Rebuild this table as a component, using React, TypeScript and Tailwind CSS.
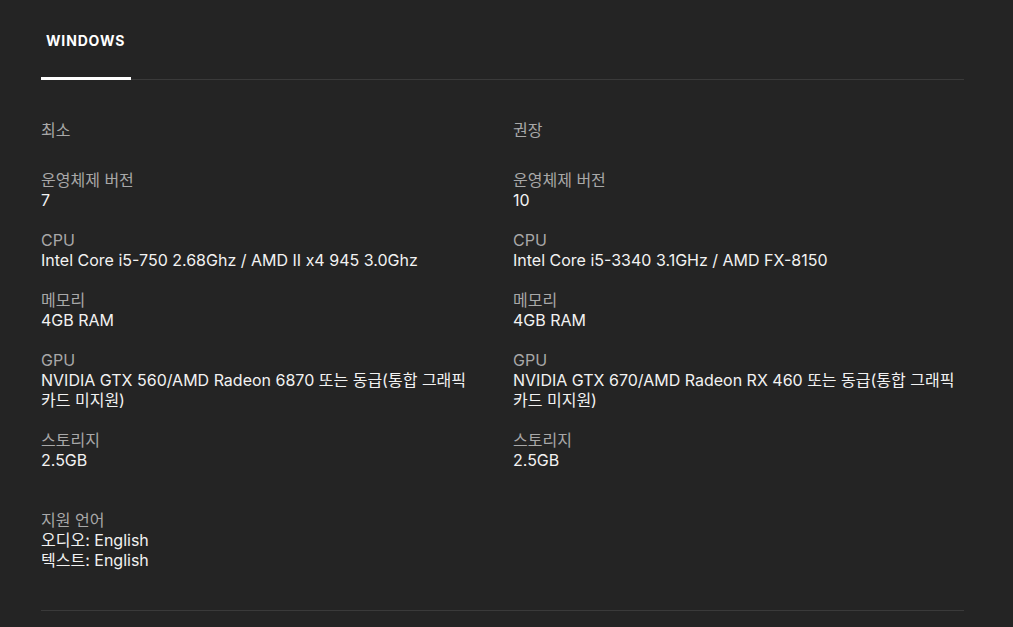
import React from "react";

const font = { fontFamily: 'Inter, "Noto Sans CJK KR", sans-serif' };

type Row = { label: string; value: string };

const minRows: Row[] = [
  { label: "운영체제 버전", value: "7" },
  { label: "CPU", value: "Intel Core i5-750 2.68Ghz / AMD II x4 945 3.0Ghz" },
  { label: "메모리", value: "4GB RAM" },
  { label: "GPU", value: "NVIDIA GTX 560/AMD Radeon 6870 또는 동급(통합 그래픽 카드 미지원)" },
  { label: "스토리지", value: "2.5GB" },
];
const recRows: Row[] = [
  { label: "운영체제 버전", value: "10" },
  { label: "CPU", value: "Intel Core i5-3340 3.1GHz / AMD FX-8150" },
  { label: "메모리", value: "4GB RAM" },
  { label: "GPU", value: "NVIDIA GTX 670/AMD Radeon RX 460 또는 동급(통합 그래픽 카드 미지원)" },
  { label: "스토리지", value: "2.5GB" },
];

function Col({ title, rows }: { title: string; rows: Row[] }) {
  return (
    <div className="flex flex-col break-keep">
      <div className="text-base leading-5 text-[#a8a8a8] mb-[30px]">{title}</div>
      <div className="flex flex-col gap-5">
        {rows.map((r) => (
          <div key={r.label} className="flex flex-col">
            <div className="text-base leading-5 text-[#a8a8a8]">{r.label}</div>
            <div className="text-base leading-5 text-[#f2f2f2]">{r.value}</div>
          </div>
        ))}
      </div>
    </div>
  );
}

export default function App() {
  return (
    <div className="min-h-[627px] w-full bg-[#242424] pl-[41px] pr-[49px] pt-[31px]" style={font}>
      <div className="flex border-b border-[#3a3a3a]">
        <div className="relative w-[90px] pl-[5px] pb-[28px] text-[14px] font-bold tracking-[0.06em] leading-5 text-white">
          WINDOWS
          <div className="absolute left-0 right-0 bottom-[-1px] h-[3px] bg-white" />
        </div>
      </div>
      <div className="mt-[40px] grid grid-cols-2 gap-x-[21px]">
        <Col title="최소" rows={minRows} />
        <Col title="권장" rows={recRows} />
      </div>
      <div className="mt-[40px] flex flex-col text-base leading-5">
        <div className="text-[#a8a8a8]">지원 언어</div>
        <div className="text-[#f2f2f2]">오디오: English</div>
        <div className="text-[#f2f2f2]">텍스트: English</div>
      </div>
      <div className="mt-[40px] border-b border-[#3a3a3a]" />
    </div>
  );
}
